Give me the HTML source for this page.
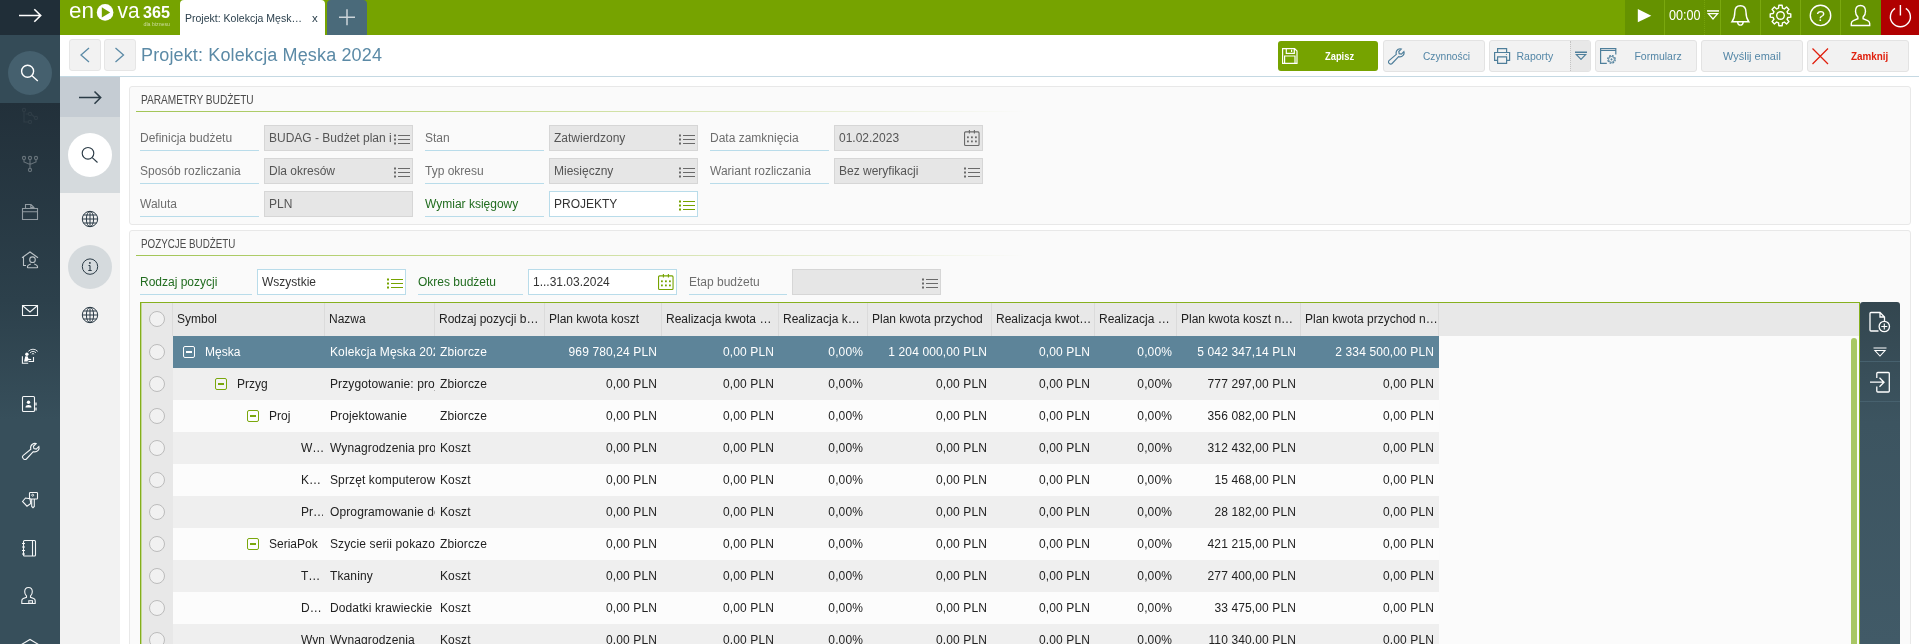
<!DOCTYPE html>
<html lang="pl">
<head>
<meta charset="utf-8">
<title>Projekt: Kolekcja Męska 2024</title>
<style>
*{box-sizing:border-box;margin:0;padding:0}
html,body{width:1919px;height:644px;overflow:hidden;background:#fff;font-family:"Liberation Sans",sans-serif;font-size:12px;color:#333}
.abs{position:absolute}
#side{position:absolute;left:0;top:0;width:60px;height:644px;background:linear-gradient(#22303a 103px,#2c404b 300px,#374f5b 420px,#374f5b)}
#side .top{position:absolute;left:0;top:0;width:60px;height:35px;background:#202e38}
#side .srch{position:absolute;left:0;top:35px;width:60px;height:68px;background:#344b57}
#side .srch i{position:absolute;left:8px;top:16px;width:44px;height:44px;border-radius:50%;background:#45606e}
#side svg{position:absolute}
#hdr{position:absolute;left:60px;top:0;width:1859px;height:35px;background:#76a300}
#tab{position:absolute;left:180px;top:0;width:145px;height:35px;background:#fff;border-radius:4px 4px 0 0;font-size:10.5px;color:#2c404d}
#tab span{position:absolute;left:5px;top:12px;white-space:nowrap;letter-spacing:.01px}
#tab b{position:absolute;left:132px;top:11.5px;font-weight:normal;font-size:11.5px}
#plus{position:absolute;left:327px;top:0;width:40px;height:35px;background:#4a6a7a;border-radius:4px 4px 0 0}
#rg{position:absolute;left:1625px;top:0;width:256px;height:35px;background:#659200}
#rg .d{position:absolute;top:0;width:1px;height:35px;background:#70a000}
#pwr{position:absolute;left:1881px;top:0;width:38px;height:35px;background:#b00000}
.cond{display:inline-block;transform-origin:0 50%;white-space:nowrap}
#tbar{position:absolute;left:60px;top:35px;width:1859px;height:42px;background:#fff;border-bottom:1px solid #c5d9e3}
.nb{position:absolute;top:39px;width:32px;height:32px;background:#f2f2f2;border:1px solid #e6e6e6;border-radius:3px}
#title{position:absolute;left:141px;top:44.5px;font-size:18px;color:#5b8aa6;white-space:nowrap;letter-spacing:0.14px}
.btn{position:absolute;top:40px;width:102px;height:32px;background:#f2f2f2;border:1px solid #e3e3e3;border-radius:3px;color:#5386a6;font-size:10.5px;overflow:hidden}
.btn .t{position:absolute;top:9px;line-height:12px;white-space:nowrap;transform-origin:0 50%}
#inner{position:absolute;left:60px;top:77px;width:60px;height:567px;background:#f2f2f2}
#inner .a{position:absolute;left:0;top:0;width:60px;height:40px;background:#c5ccd3}
#inner .b{position:absolute;left:0;top:40px;width:60px;height:76px;background:#d5dadd}
#inner .c1{position:absolute;left:8px;top:56px;width:44px;height:44px;border-radius:50%;background:#fff}
#inner .c2{position:absolute;left:8px;top:168px;width:44px;height:44px;border-radius:50%;background:#d5dadd}
.panel{position:absolute;left:129px;width:1782px;background:#fafafa;border:1px solid #e8e8e8;border-radius:3px}
.sh{position:absolute;left:141px;font-size:13px;color:#4c4c4c;white-space:nowrap;transform-origin:0 50%;transform:scaleX(.78)}
.ul{position:absolute;left:136px;width:890px;height:1px;background:linear-gradient(90deg,#a2c556,#c5da8c 40%,rgba(220,230,190,.6) 80%,rgba(250,250,250,0))}
.lb{position:absolute;height:26px;width:119px;border-bottom:1px solid #b9dcea;color:#6e6e6e;line-height:27px;white-space:nowrap}
.lb.g{color:#216c1f}
.fd{position:absolute;height:26px;width:149px;background:#e6e6e6;border:1px solid #d6d6d6;color:#555;line-height:24px;padding-left:4px;white-space:nowrap;overflow:hidden}
.fd.w{background:#fff;border-color:#b9dcea;color:#333}
.fd svg{position:absolute;right:1px;top:4px}
.fd u{text-decoration:none;display:block;width:124px;overflow:hidden;white-space:nowrap}

.th{position:absolute;top:303px;height:33px;line-height:32px;padding-left:4px;color:#222;white-space:nowrap;overflow:hidden;border-left:1px solid #dbdbdb}
.row{position:absolute;left:173px;width:1266px;height:32px}
.row.o{background:#efefef}
.row.e{background:#fcfcfc}
.row.s{background:#5d8499;color:#fff}
.c{position:absolute;top:0;height:32px;line-height:32px;white-space:nowrap;overflow:hidden;color:#222}
.row.s .c{color:#fff}
.c.r{text-align:right;padding-right:5px;letter-spacing:.12px}
.c.l{padding-left:5px;letter-spacing:.12px}
.ck{position:absolute;left:149px;width:16px;height:16px;border-radius:50%;border:1px solid #bcbcbc;background:#f1f1f1}
.ti{position:absolute;top:10px;width:12px;height:12px;border:1.5px solid #7aa70c;border-radius:2px;background:rgba(255,255,255,.35)}
.ti:after{content:"";position:absolute;left:1.5px;top:3.5px;width:6px;height:2px;background:#7aa70c}
.row.s .ti{border-color:#fff;background:none}
.row.s .ti:after{background:#fff}
body{will-change:transform}
</style>
</head>
<body>
<div id="side">
 <div class="top"></div>
 <div class="srch"><i></i></div>
<!--SIDEIC-->
<svg style="left:0;top:0" width="60" height="35" viewBox="0 0 60 35" fill="none" stroke="#fff" stroke-width="1.6"><path d="M19 15.5H40.5M34.3 9.2l6.4 6.3-6.4 6.3"/></svg>
<svg style="left:0;top:35px" width="60" height="68" viewBox="0 35 60 68" fill="none" stroke="#fff" stroke-width="1.4"><circle cx="27.6" cy="71.3" r="6"/><path d="M32 75.7l5.8 5.3"/></svg>
<svg style="left:0;top:103px" width="60" height="541" viewBox="0 103 60 541" fill="none" stroke="#f4f6f7" stroke-width="1.1">
<g opacity=".055"><circle cx="24" cy="110" r="1.6"/><circle cx="30" cy="114" r="1.6"/><circle cx="36" cy="118" r="1.6"/><circle cx="30" cy="122" r="1.6"/><path d="M24 111.6V122h4.4M25.6 114H28.4M31.6 114.5l2.8 2.5"/></g>
<g opacity=".32"><circle cx="24" cy="158" r="1.6"/><circle cx="30" cy="158" r="1.6"/><circle cx="36" cy="158" r="1.6"/><circle cx="30" cy="170" r="1.6"/><path d="M24 159.6V162l6 2.5 6-2.5v-2.4M30 159.6v8.800"/></g>
<g opacity=".52"><path d="M22.500 208.500h15v11h-15zM22.500 211.800h15M25.500 208.500v-4h5.500l3 3v1M30.800 204.600v3h3"/></g>
<g opacity=".72"><path d="M22 257.700l8-5.700 8 5.700M23.500 257v8.500h2.500"/><circle cx="32.500" cy="259.700" r="2.800"/><path d="M27.500 268v-1.500c0-1.500 1.500-2 3.300-2.600M37.500 268v-1.500c0-1.500-1.500-2-3.300-2.600M27.500 267.700h10"/></g>
<g><path d="M22.500 305.500h15v10h-15zM23 306l7 6 7-6"/></g>
<g><path d="M28.300 351.400a6.200 6.200 0 0 1 9.400 0M30 352.800a4 4 0 0 1 6 0M31.800 354.100a1.700 1.700 0 0 1 2.400 0" stroke-width=".9"/><circle cx="26.900" cy="354.200" r="1.700" fill="#fff" stroke="none"/><path d="M25.300 356.200h2.300l.9 2.600 2.700.2v1.100l-3.300.1-.3 1.400h-3.600z" fill="#fff" stroke="none"/><path d="M22.400 356.300v7h5.800M33.500 357v4.500h-5"/></g>
<g><rect x="22.500" y="396.500" width="12" height="15" rx="1"/><path d="M36 402.500v3M36 407.500v3" stroke-width="1.300"/><circle cx="28.500" cy="402.200" r="1.700" fill="#fff" stroke="none"/><path d="M25.500 407.500c0-1.800 1.300-2.500 3-2.500s3 .7 3 2.500z" fill="#fff" stroke="none"/></g>
<g><path d="M23 458.200c-.8-.8-.8-1.800 0-2.600l7.800-6.400c-.6-2.200.2-4 1.600-5 1.300-.9 2.700-1 3.700-.6l-2.700 2.700.5 2.300 2.300.5 2.700-2.700c.4 1.200.2 2.700-.8 3.900-1.100 1.300-2.800 1.900-4.800 1.400l-6.900 7.300c-.8.800-2.600.8-3.400-.8z"/></g>
<g><rect x="29.500" y="492.500" width="8" height="6.500" rx=".8"/><circle cx="32.700" cy="495.200" r="1" stroke-width=".9"/><path d="M31.700 499v7.500l1.300 1.200 1.300-1.200V499"/><path d="M22.500 501.500l3-3.500 4.500.8.800 4.700-3.800 2.700z"/></g>
<g><rect x="23.500" y="540.500" width="12" height="15.500" rx="1"/><path d="M32.500 540.500v15.500M22 543.500h3M22 547h3M22 550.500h3M22 554h3"/></g>
<g><path d="M28.500 587.500c2.400 0 3.800 1.800 3.800 4.300 0 2-.8 3.400-1.800 4.200v1.300l3.200 1.200c1.100.5 1.500 1.100 1.500 2.200v2.800h-13.400v-2.800c0-1.100.4-1.700 1.500-2.200l3.200-1.200v-1.300c-1-.8-1.800-2.200-1.800-4.200 0-2.500 1.400-4.300 3.800-4.300z"/><rect x="28.800" y="600.700" width="3.700" height="2.500" stroke-width="1"/></g>
<g><path d="M21.500 644.500l8.500-5 8.500 5"/></g>
</svg>
<!--/SIDEIC-->
</div>
<div id="hdr"></div>
<div id="tab"><span>Projekt: Kolekcja Męsk…</span><b>x</b></div>
<div id="plus"></div>
<div id="rg"></div>
<div id="pwr"></div>
<!--HDRIC-->
<svg class="abs" style="left:60px;top:0" width="120" height="35" viewBox="60 0 120 35">
<g fill="#fff" font-family="Liberation Sans, sans-serif">
<text x="69" y="18" font-size="22.5" textLength="25" lengthAdjust="spacingAndGlyphs">en</text>
<circle cx="105.100" cy="12.400" r="8.300"/>
<path d="M101.800 7.300v10.200l8.400-5.100z" fill="#76a300"/>
<text x="117.500" y="18" font-size="22.500" textLength="22" lengthAdjust="spacingAndGlyphs">va</text>
<text x="143" y="18" font-size="15.800" font-weight="bold" textLength="27" lengthAdjust="spacingAndGlyphs">365</text>
<text x="143.500" y="25.800" font-size="4.600" opacity=".6" textLength="26.500" lengthAdjust="spacingAndGlyphs">dla biznesu</text>
</g></svg>
<svg class="abs" style="left:327px;top:0" width="40" height="35" viewBox="0 0 40 35" fill="none" stroke="#fff" stroke-opacity=".72" stroke-width="1.500"><path d="M12 17.200h16M20 9.200v16"/></svg>
<svg class="abs" style="left:1625px;top:0" width="294" height="35" viewBox="1625 0 294 35" fill="none" stroke="#fff" stroke-width="1.400">
<path d="M1637.800 9v13.300l13.500-6.650z" fill="#fff" stroke="none"/>
<g stroke="#7aa80e" stroke-width="1"><path d="M1664.500 0v35M1720.500 0v35M1760.500 0v35M1800.500 0v35M1840.500 0v35"/></g>
<path d="M1704.500 0v35" stroke="#75a30a" stroke-width="1" stroke-dasharray="1 1"/>
<path d="M1707 10.950h12" stroke-width="1.500"/><path d="M1708.300 13.700h9.400l-4.700 5.300z" stroke-width="1.200"/>
<path d="M1740.400 5.700c3.800 0 5.600 2.800 5.600 6.600 0 4.600.8 6.800 2.800 9.400h-16.800c2-2.600 2.800-4.800 2.800-9.400 0-3.800 1.800-6.600 5.600-6.600zM1737.600 22.300c.3 1.800 1.400 2.800 2.800 2.800s2.500-1 2.800-2.800"/>
<g transform="translate(1780.500 15.500)"><circle r="3.800"/><path d="M-1.95 -7.34 L-1.66 -10.27 L1.66 -10.27 L1.95 -7.34 L3.81 -6.57 L6.09 -8.43 L8.43 -6.09 L6.57 -3.81 L7.34 -1.95 L10.27 -1.66 L10.27 1.66 L7.34 1.95 L6.57 3.81 L8.43 6.09 L6.09 8.43 L3.81 6.57 L1.95 7.34 L1.66 10.27 L-1.66 10.27 L-1.95 7.34 L-3.81 6.57 L-6.09 8.43 L-8.43 6.09 L-6.57 3.81 L-7.34 1.95 L-10.27 1.66 L-10.27 -1.66 L-7.34 -1.95 L-6.57 -3.81 L-8.43 -6.09 L-6.09 -8.43 L-3.81 -6.57z" stroke-linejoin="round"/></g>
<circle cx="1820.500" cy="15.400" r="10.200"/>
<text x="1820.500" y="21" font-family="Liberation Sans, sans-serif" font-size="15.500" fill="#fff" stroke="none" text-anchor="middle">?</text>
<path d="M1860.500 5.500c3.200 0 5 2.500 5 5.800 0 2.700-1 4.600-2.400 5.800v1.600l4.600 1.900c1.500.7 2 1.600 2 3v1.900h-18.400v-1.900c0-1.400.5-2.300 2-3l4.600-1.900v-1.600c-1.400-1.200-2.400-3.100-2.400-5.800 0-3.300 1.800-5.800 5-5.800z"/>
<path d="M1900.400 5v10.500M1895 8.300a10 10 0 1 0 10.800 0"/>
</svg>
<!--/HDRIC-->
<div id="tbar"></div>
<div class="nb" style="left:69px"></div>
<div class="nb" style="left:104px"></div>
<!--TB-->
<div class="abs" style="left:1669px;top:7px;font-size:14.5px;color:#fff;white-space:nowrap;transform-origin:0 50%;transform:scaleX(.87)">00:00</div>
<svg class="abs" style="left:69px;top:39px" width="67" height="32" viewBox="69 39 67 32" fill="none" stroke="#5b8aa6" stroke-width="1.300"><path d="M89 48l-8 7 8 7M115.500 48l8 7-8 7"/></svg>
<div class="btn" style="left:1278px;top:41px;width:100px;height:30px;border:0;background:#76a300;color:#fff"><span class="t" style="left:47px;top:9px;font-weight:bold;transform:scaleX(.89)">Zapisz</span>
<svg class="abs" style="left:4px;top:7px" width="16" height="16" viewBox="0 0 16 16" fill="none" stroke="#fff" stroke-width="1.200"><path d="M.600 .600h12l2.400 2.400v12.400h-14.400zM4.300 .600v4.700h8v-4.700M9.600 1.800v2.300M2.600 15.400v-7.400h10.400v7.400"/></svg></div>
<div class="btn" style="left:1383px"><span class="t" style="left:38.500px;transform:scaleX(.97)">Czynności</span>
<svg class="abs" style="left:4px;top:7px" width="17" height="17" viewBox="0 0 17 17" fill="none" stroke="#4f7f9b" stroke-width="1.200"><path d="M1 15.200c-.8-.8-.8-1.800 0-2.600l7.300-6.200c-.6-2.100.2-3.800 1.500-4.800 1.200-.9 2.600-1 3.500-.6l-2.500 2.500.4 2.200 2.200.4 2.500-2.500c.4 1.200.2 2.600-.8 3.700-1 1.200-2.600 1.800-4.500 1.300l-6.500 6.900c-.8.800-2.300.8-3.100-.3z"/></svg></div>
<div class="btn" style="left:1489px"><span class="t" style="left:26.500px">Raporty</span>
<div class="abs" style="left:80px;top:0;width:20px;height:30px;background:#e8e8e8;border-left:1px dotted #c4c4c4"></div>
<svg class="abs" style="left:4px;top:7px" width="17" height="17" viewBox="0 0 17 17" fill="none" stroke="#4f7f9b" stroke-width="1.200"><path d="M3.600 4.500v-3.900h9v3.900M3.600 12.300h-3v-7.800h15v7.800h-3M3.600 8.900h9v6.500h-9z"/><circle cx="12.400" cy="6.500" r=".6" fill="#4f7f9b" stroke="none"/></svg>
<svg class="abs" style="left:84px;top:9px" width="14" height="12" viewBox="0 0 14 12" fill="none" stroke="#4f7f9b"><path d="M1 2.200h12" stroke-width="1.500"/><path d="M2.300 4.500h9.400l-4.700 5z" stroke-width="1.100"/></svg></div>
<div class="btn" style="left:1595px"><span class="t" style="left:38.400px">Formularz</span>
<svg class="abs" style="left:4px;top:7px" width="18" height="17" viewBox="0 0 18 17" fill="none" stroke="#4f7f9b" stroke-width="1.200"><path d="M6.800 15.400h-6.200v-14.800h15.200v5.800M.600 2.500h15.200"/><circle cx="11.500" cy="11.400" r="3.800" stroke-dasharray="1.900 1.080" stroke-width="1.200"/><circle cx="11.500" cy="11.400" r="2.900" stroke-width=".9"/><path d="M11.500 10.300v2.200M10.400 11.400h2.200" stroke-width=".8"/></svg></div>
<div class="btn" style="left:1701px"><span class="t" style="left:21.100px;transform:scaleX(1.045)">Wyślij email</span></div>
<div class="btn" style="left:1807px;color:#e0200e"><span class="t" style="left:43px;font-weight:bold;transform:scaleX(.94)">Zamknij</span>
<svg class="abs" style="left:4px;top:7px" width="17" height="17" viewBox="0 0 17 17" fill="none" stroke="#e0200e" stroke-width="1.300"><path d="M.500 .500l15.500 15.500M16 .500l-15.500 15.500"/></svg></div>
<!--/TB-->
<div id="title">Projekt: Kolekcja Męska 2024</div>
<div id="inner"><div class="a"></div><div class="b"></div><div class="c1"></div><div class="c2"></div></div>

<!--II-->
<svg class="abs" style="left:60px;top:77px" width="60" height="260" viewBox="60 77 60 260" fill="none" stroke="#2b3b46" stroke-width="1">
<path d="M79 97.600h21.500M94.500 91.500l6.200 6.100-6.200 6.100" stroke-width="1.500"/>
<circle cx="88" cy="153.300" r="5.800" stroke-width="1.150"/><path d="M92.200 157.600l5.300 4.900" stroke-width="1.150"/>
<g id="gl" transform="translate(0 .4)"><circle cx="90" cy="218.600" r="7.700"/><ellipse cx="90" cy="218.600" rx="3.600" ry="7.700"/><path d="M90 210.900v15.400M82.300 218.600h15.400M83.500 214.600h13M83.500 222.600h13" /></g>
<circle cx="90" cy="266.600" r="7.700"/><path d="M90 265.500v5M88.500 265.500h1.500M88.300 270.500h3.400" stroke-width="1.100"/><circle cx="89.900" cy="262.900" r=".9" fill="#22313b" stroke="none"/>
<g transform="translate(0 96.400)"><circle cx="90" cy="218.600" r="7.700"/><ellipse cx="90" cy="218.600" rx="3.600" ry="7.700"/><path d="M90 210.900v15.400M82.300 218.600h15.400M83.500 214.600h13M83.500 222.600h13" /></g>
</svg>
<!--/II-->
<div class="panel" style="top:86px;height:139px"></div>
<div class="panel" style="top:230px;height:430px"></div>
<div class="sh" style="top:92px">PARAMETRY BUDŻETU</div>
<div class="ul" style="top:111px"></div>
<div class="sh" style="top:236px;transform:scaleX(.756)">POZYCJE BUDŻETU</div>
<div class="ul" style="top:255px"></div>
<!--FORM-->
<div class="lb" style="left:140px;top:125px;width:119px">Definicja budżetu</div>
<div class="fd" style="left:264px;top:125px;width:149px"><u>BUDAG - Budżet plan i realizacja</u><svg width="18" height="16" viewBox="0 0 18 16"><g fill="#6a6a6a"><rect x="1" y="4.5" width="2" height="2"/><rect x="1" y="8.5" width="2" height="2"/><rect x="1" y="12.5" width="2" height="2"/><rect x="5" y="5" width="12" height="1"/><rect x="5" y="9" width="12" height="1"/><rect x="5" y="13" width="12" height="1"/></g></svg></div>
<div class="lb" style="left:425px;top:125px;width:119px">Stan</div>
<div class="fd" style="left:549px;top:125px;width:149px"><u>Zatwierdzony</u><svg width="18" height="16" viewBox="0 0 18 16"><g fill="#6a6a6a"><rect x="1" y="4.5" width="2" height="2"/><rect x="1" y="8.5" width="2" height="2"/><rect x="1" y="12.5" width="2" height="2"/><rect x="5" y="5" width="12" height="1"/><rect x="5" y="9" width="12" height="1"/><rect x="5" y="13" width="12" height="1"/></g></svg></div>
<div class="lb" style="left:710px;top:125px;width:119px">Data zamknięcia</div>
<div class="fd" style="left:834px;top:125px;width:149px"><u>01.02.2023</u><svg width="18" height="18" viewBox="0 0 18 18"><g fill="none" stroke="#6a6a6a" stroke-width="1.1"><rect x="1.55" y="1.9" width="14.5" height="13.6" rx="1"/><path d="M6.400 .1v3.400M11.400 .1v3.400"/></g><g fill="#6a6a6a"><rect x="4" y="6.400" width="1.8" height="1.8"/><rect x="8" y="6.400" width="1.8" height="1.8"/><rect x="12" y="6.400" width="1.8" height="1.8"/><rect x="4" y="10.500" width="1.8" height="1.8"/><rect x="8" y="10.500" width="1.8" height="1.8"/><rect x="12" y="10.500" width="1.8" height="1.8"/></g></svg></div>
<div class="lb" style="left:140px;top:158px;width:119px">Sposób rozliczania</div>
<div class="fd" style="left:264px;top:158px;width:149px"><u>Dla okresów</u><svg width="18" height="16" viewBox="0 0 18 16"><g fill="#6a6a6a"><rect x="1" y="4.5" width="2" height="2"/><rect x="1" y="8.5" width="2" height="2"/><rect x="1" y="12.5" width="2" height="2"/><rect x="5" y="5" width="12" height="1"/><rect x="5" y="9" width="12" height="1"/><rect x="5" y="13" width="12" height="1"/></g></svg></div>
<div class="lb" style="left:425px;top:158px;width:119px">Typ okresu</div>
<div class="fd" style="left:549px;top:158px;width:149px"><u>Miesięczny</u><svg width="18" height="16" viewBox="0 0 18 16"><g fill="#6a6a6a"><rect x="1" y="4.5" width="2" height="2"/><rect x="1" y="8.5" width="2" height="2"/><rect x="1" y="12.5" width="2" height="2"/><rect x="5" y="5" width="12" height="1"/><rect x="5" y="9" width="12" height="1"/><rect x="5" y="13" width="12" height="1"/></g></svg></div>
<div class="lb" style="left:710px;top:158px;width:119px">Wariant rozliczania</div>
<div class="fd" style="left:834px;top:158px;width:149px"><u>Bez weryfikacji</u><svg width="18" height="16" viewBox="0 0 18 16"><g fill="#6a6a6a"><rect x="1" y="4.5" width="2" height="2"/><rect x="1" y="8.5" width="2" height="2"/><rect x="1" y="12.5" width="2" height="2"/><rect x="5" y="5" width="12" height="1"/><rect x="5" y="9" width="12" height="1"/><rect x="5" y="13" width="12" height="1"/></g></svg></div>
<div class="lb" style="left:140px;top:191px;width:119px">Waluta</div>
<div class="fd" style="left:264px;top:191px;width:149px"><u>PLN</u></div>
<div class="lb g" style="left:425px;top:191px;width:119px">Wymiar księgowy</div>
<div class="fd w" style="left:549px;top:191px;width:149px"><u>PROJEKTY</u><svg width="18" height="16" viewBox="0 0 18 16"><g fill="#76a300"><rect x="1" y="4.5" width="2" height="2"/><rect x="1" y="8.5" width="2" height="2"/><rect x="1" y="12.5" width="2" height="2"/><rect x="5" y="5" width="12" height="1"/><rect x="5" y="9" width="12" height="1"/><rect x="5" y="13" width="12" height="1"/></g></svg></div>
<div class="lb g" style="left:140px;top:269px;width:112px">Rodzaj pozycji</div>
<div class="fd w" style="left:257px;top:269px;width:149px"><u>Wszystkie</u><svg width="18" height="16" viewBox="0 0 18 16"><g fill="#76a300"><rect x="1" y="4.5" width="2" height="2"/><rect x="1" y="8.5" width="2" height="2"/><rect x="1" y="12.5" width="2" height="2"/><rect x="5" y="5" width="12" height="1"/><rect x="5" y="9" width="12" height="1"/><rect x="5" y="13" width="12" height="1"/></g></svg></div>
<div class="lb g" style="left:418px;top:269px;width:105px">Okres budżetu</div>
<div class="fd w" style="left:528px;top:269px;width:149px"><u>1...31.03.2024</u><svg width="18" height="18" viewBox="0 0 18 18"><g fill="none" stroke="#76a300" stroke-width="1.1"><rect x="1.55" y="1.9" width="14.5" height="13.6" rx="1"/><path d="M6.400 .1v3.400M11.400 .1v3.400"/></g><g fill="#76a300"><rect x="4" y="6.400" width="1.8" height="1.8"/><rect x="8" y="6.400" width="1.8" height="1.8"/><rect x="12" y="6.400" width="1.8" height="1.8"/><rect x="4" y="10.500" width="1.8" height="1.8"/><rect x="8" y="10.500" width="1.8" height="1.8"/><rect x="12" y="10.500" width="1.8" height="1.8"/></g></svg></div>
<div class="lb" style="left:689px;top:269px;width:98px">Etap budżetu</div>
<div class="fd" style="left:792px;top:269px;width:149px"><u></u><svg width="18" height="16" viewBox="0 0 18 16"><g fill="#6a6a6a"><rect x="1" y="4.5" width="2" height="2"/><rect x="1" y="8.5" width="2" height="2"/><rect x="1" y="12.5" width="2" height="2"/><rect x="5" y="5" width="12" height="1"/><rect x="5" y="9" width="12" height="1"/><rect x="5" y="13" width="12" height="1"/></g></svg></div>
<!--/FORM-->
<!--TABLE-->
<div id="grid">
<div class="abs" style="left:140px;top:302px;width:1720px;height:342px;background:#fbfbfb;border-left:1px solid #84ae1c;border-top:1px solid #86b01f;border-right:1px solid #86b01f;box-shadow:inset 1px 0 0 #c3d895"></div>
<div class="abs" style="left:142px;top:303px;width:1717px;height:33px;background:#e8e8e8"></div>
<div class="abs" style="left:142px;top:336px;width:31px;height:308px;background:#e8e8e8"></div>
<div class="th" style="left:172px;width:152px">Symbol</div>
<div class="th" style="left:324px;width:110px">Nazwa</div>
<div class="th" style="left:434px;width:110px">Rodzaj pozycji b…</div>
<div class="th" style="left:544px;width:117px">Plan kwota koszt</div>
<div class="th" style="left:661px;width:117px">Realizacja kwota …</div>
<div class="th" style="left:778px;width:89px">Realizacja k…</div>
<div class="th" style="left:867px;width:124px">Plan kwota przychod</div>
<div class="th" style="left:991px;width:103px">Realizacja kwot…</div>
<div class="th" style="left:1094px;width:82px">Realizacja …</div>
<div class="th" style="left:1176px;width:124px">Plan kwota koszt n…</div>
<div class="th" style="left:1300px;width:138px">Plan kwota przychod n…</div>
<div class="th" style="left:1438px;width:10px"></div>
<div class="ck" style="top:311px"></div>
<div class="ck" style="top:344px"></div>
<div class="row s" style="top:336px"><i class="ti" style="left:10px"></i><div class="c" style="left:32px;width:118px">Męska</div><div class="c l" style="left:152px;width:110px">Kolekcja Męska 2024</div><div class="c l" style="left:262px;width:110px">Zbiorcze</div><div class="c r" style="left:372px;width:117px">969 780,24 PLN</div><div class="c r" style="left:489px;width:117px">0,00 PLN</div><div class="c r" style="left:606px;width:89px">0,00%</div><div class="c r" style="left:695px;width:124px">1 204 000,00 PLN</div><div class="c r" style="left:819px;width:103px">0,00 PLN</div><div class="c r" style="left:922px;width:82px">0,00%</div><div class="c r" style="left:1004px;width:124px">5 042 347,14 PLN</div><div class="c r" style="left:1128px;width:138px">2 334 500,00 PLN</div></div>
<div class="ck" style="top:376px"></div>
<div class="row o" style="top:368px"><i class="ti" style="left:42px"></i><div class="c" style="left:64px;width:86px">Przyg</div><div class="c l" style="left:152px;width:110px">Przygotowanie: projekt i szycie</div><div class="c l" style="left:262px;width:110px">Zbiorcze</div><div class="c r" style="left:372px;width:117px">0,00 PLN</div><div class="c r" style="left:489px;width:117px">0,00 PLN</div><div class="c r" style="left:606px;width:89px">0,00%</div><div class="c r" style="left:695px;width:124px">0,00 PLN</div><div class="c r" style="left:819px;width:103px">0,00 PLN</div><div class="c r" style="left:922px;width:82px">0,00%</div><div class="c r" style="left:1004px;width:124px">777 297,00 PLN</div><div class="c r" style="left:1128px;width:138px">0,00 PLN</div></div>
<div class="ck" style="top:408px"></div>
<div class="row e" style="top:400px"><i class="ti" style="left:74px"></i><div class="c" style="left:96px;width:54px">Proj</div><div class="c l" style="left:152px;width:110px">Projektowanie</div><div class="c l" style="left:262px;width:110px">Zbiorcze</div><div class="c r" style="left:372px;width:117px">0,00 PLN</div><div class="c r" style="left:489px;width:117px">0,00 PLN</div><div class="c r" style="left:606px;width:89px">0,00%</div><div class="c r" style="left:695px;width:124px">0,00 PLN</div><div class="c r" style="left:819px;width:103px">0,00 PLN</div><div class="c r" style="left:922px;width:82px">0,00%</div><div class="c r" style="left:1004px;width:124px">356 082,00 PLN</div><div class="c r" style="left:1128px;width:138px">0,00 PLN</div></div>
<div class="ck" style="top:440px"></div>
<div class="row o" style="top:432px"><div class="c" style="left:128px;width:22px">W…</div><div class="c l" style="left:152px;width:110px">Wynagrodzenia projektantów</div><div class="c l" style="left:262px;width:110px">Koszt</div><div class="c r" style="left:372px;width:117px">0,00 PLN</div><div class="c r" style="left:489px;width:117px">0,00 PLN</div><div class="c r" style="left:606px;width:89px">0,00%</div><div class="c r" style="left:695px;width:124px">0,00 PLN</div><div class="c r" style="left:819px;width:103px">0,00 PLN</div><div class="c r" style="left:922px;width:82px">0,00%</div><div class="c r" style="left:1004px;width:124px">312 432,00 PLN</div><div class="c r" style="left:1128px;width:138px">0,00 PLN</div></div>
<div class="ck" style="top:472px"></div>
<div class="row e" style="top:464px"><div class="c" style="left:128px;width:22px">K…</div><div class="c l" style="left:152px;width:110px">Sprzęt komputerowy</div><div class="c l" style="left:262px;width:110px">Koszt</div><div class="c r" style="left:372px;width:117px">0,00 PLN</div><div class="c r" style="left:489px;width:117px">0,00 PLN</div><div class="c r" style="left:606px;width:89px">0,00%</div><div class="c r" style="left:695px;width:124px">0,00 PLN</div><div class="c r" style="left:819px;width:103px">0,00 PLN</div><div class="c r" style="left:922px;width:82px">0,00%</div><div class="c r" style="left:1004px;width:124px">15 468,00 PLN</div><div class="c r" style="left:1128px;width:138px">0,00 PLN</div></div>
<div class="ck" style="top:504px"></div>
<div class="row o" style="top:496px"><div class="c" style="left:128px;width:22px">Pr…</div><div class="c l" style="left:152px;width:110px">Oprogramowanie do projektowania</div><div class="c l" style="left:262px;width:110px">Koszt</div><div class="c r" style="left:372px;width:117px">0,00 PLN</div><div class="c r" style="left:489px;width:117px">0,00 PLN</div><div class="c r" style="left:606px;width:89px">0,00%</div><div class="c r" style="left:695px;width:124px">0,00 PLN</div><div class="c r" style="left:819px;width:103px">0,00 PLN</div><div class="c r" style="left:922px;width:82px">0,00%</div><div class="c r" style="left:1004px;width:124px">28 182,00 PLN</div><div class="c r" style="left:1128px;width:138px">0,00 PLN</div></div>
<div class="ck" style="top:536px"></div>
<div class="row e" style="top:528px"><i class="ti" style="left:74px"></i><div class="c" style="left:96px;width:54px">SeriaPok</div><div class="c l" style="left:152px;width:110px">Szycie serii pokazowej</div><div class="c l" style="left:262px;width:110px">Zbiorcze</div><div class="c r" style="left:372px;width:117px">0,00 PLN</div><div class="c r" style="left:489px;width:117px">0,00 PLN</div><div class="c r" style="left:606px;width:89px">0,00%</div><div class="c r" style="left:695px;width:124px">0,00 PLN</div><div class="c r" style="left:819px;width:103px">0,00 PLN</div><div class="c r" style="left:922px;width:82px">0,00%</div><div class="c r" style="left:1004px;width:124px">421 215,00 PLN</div><div class="c r" style="left:1128px;width:138px">0,00 PLN</div></div>
<div class="ck" style="top:568px"></div>
<div class="row o" style="top:560px"><div class="c" style="left:128px;width:22px">T…</div><div class="c l" style="left:152px;width:110px">Tkaniny</div><div class="c l" style="left:262px;width:110px">Koszt</div><div class="c r" style="left:372px;width:117px">0,00 PLN</div><div class="c r" style="left:489px;width:117px">0,00 PLN</div><div class="c r" style="left:606px;width:89px">0,00%</div><div class="c r" style="left:695px;width:124px">0,00 PLN</div><div class="c r" style="left:819px;width:103px">0,00 PLN</div><div class="c r" style="left:922px;width:82px">0,00%</div><div class="c r" style="left:1004px;width:124px">277 400,00 PLN</div><div class="c r" style="left:1128px;width:138px">0,00 PLN</div></div>
<div class="ck" style="top:600px"></div>
<div class="row e" style="top:592px"><div class="c" style="left:128px;width:22px">D…</div><div class="c l" style="left:152px;width:110px">Dodatki krawieckie</div><div class="c l" style="left:262px;width:110px">Koszt</div><div class="c r" style="left:372px;width:117px">0,00 PLN</div><div class="c r" style="left:489px;width:117px">0,00 PLN</div><div class="c r" style="left:606px;width:89px">0,00%</div><div class="c r" style="left:695px;width:124px">0,00 PLN</div><div class="c r" style="left:819px;width:103px">0,00 PLN</div><div class="c r" style="left:922px;width:82px">0,00%</div><div class="c r" style="left:1004px;width:124px">33 475,00 PLN</div><div class="c r" style="left:1128px;width:138px">0,00 PLN</div></div>
<div class="ck" style="top:632px"></div>
<div class="row o" style="top:624px"><div class="c" style="left:128px;width:23px">Wyn</div><div class="c l" style="left:152px;width:110px">Wynagrodzenia</div><div class="c l" style="left:262px;width:110px">Koszt</div><div class="c r" style="left:372px;width:117px">0,00 PLN</div><div class="c r" style="left:489px;width:117px">0,00 PLN</div><div class="c r" style="left:606px;width:89px">0,00%</div><div class="c r" style="left:695px;width:124px">0,00 PLN</div><div class="c r" style="left:819px;width:103px">0,00 PLN</div><div class="c r" style="left:922px;width:82px">0,00%</div><div class="c r" style="left:1004px;width:124px">110 340,00 PLN</div><div class="c r" style="left:1128px;width:138px">0,00 PLN</div></div>
<div class="abs" style="left:1851px;top:338px;width:6px;height:320px;border-radius:3px;background:#a8c764"></div>
</div>
<!--/TABLE-->
<!--RT-->
<div class="abs" style="left:1860px;top:302px;width:40px;height:342px;border-radius:3px 3px 0 0;background:linear-gradient(#33464f,#3c5460 120px,#415a67)"></div>
<div class="abs" style="left:1860px;top:361px;width:40px;height:1px;background:#47616e"></div>
<div class="abs" style="left:1860px;top:401px;width:40px;height:1px;background:#47616e"></div>
<svg class="abs" style="left:1860px;top:302px" width="40" height="100" viewBox="1860 302 40 100" fill="none" stroke="#fff" stroke-width="1.300">
<path d="M1878.500 331h-7.500c-.6 0-1-.4-1-1v-16.500c0-.6.400-1 1-1h9l4.500 4.500v4M1880 312.800v4.200h4.300"/>
<circle cx="1884.300" cy="326.500" r="5.200" fill="#34484f"/><path d="M1884.300 323.500v6M1881.300 326.500h6" stroke-width="1.100"/>
<path d="M1873.500 348h13M1875 350.500h10l-5 5.500z" stroke-width="1.100"/>
<path d="M1876.800 378v-4.500c0-.6.400-1 1-1h10.500c.6 0 1 .4 1 1v17.500c0 .6-.4 1-1 1h-10.500c-.6 0-1-.4-1-1v-4.500M1870 382.200h14M1879.500 377.700l4.500 4.500-4.500 4.500"/>
</svg>
<!--/RT-->
</body>
</html>
